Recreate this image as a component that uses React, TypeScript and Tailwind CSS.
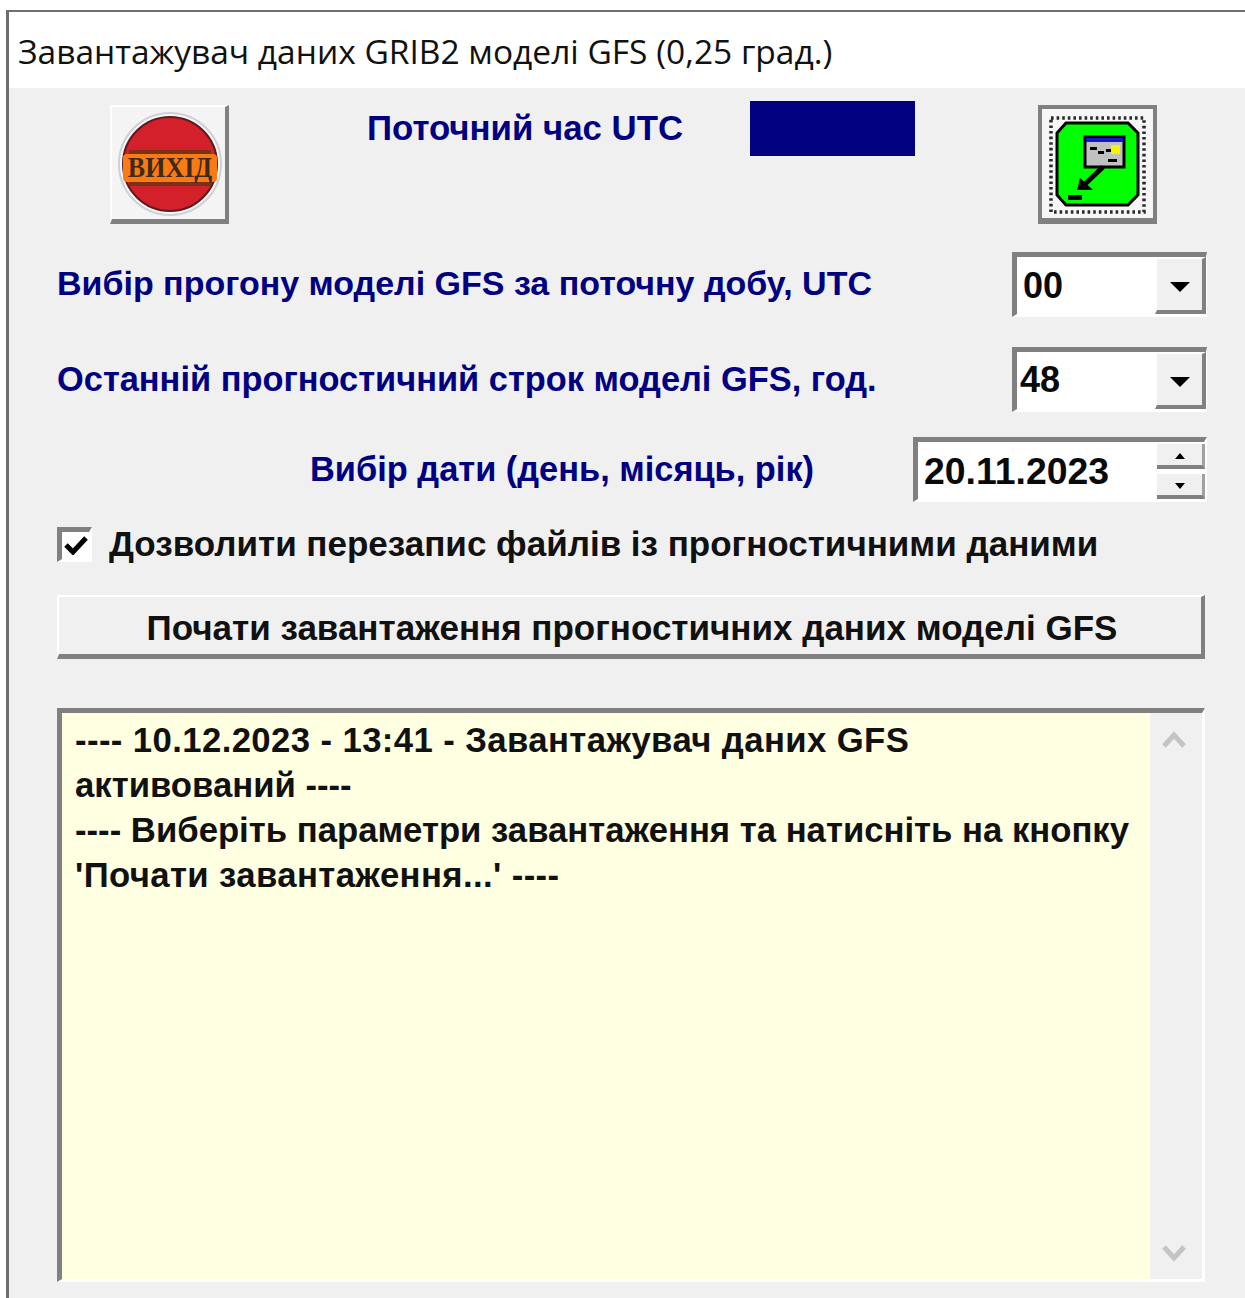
import { ReactNode } from "react"

const raised = "border-t-2 border-l-2 border-t-white border-l-white border-r-[4px] border-b-[5px] border-r-[#808080] border-b-[#808080]"
const sunken = "border-t-[5px] border-l-[5px] border-t-[#808080] border-l-[#808080] border-r-[3px] border-b-[3px] border-r-white border-b-white"
const comboFrame = "border-t-[5px] border-l-[5px] border-t-[#808080] border-l-[#808080] border-r border-b-[3px] border-r-white border-b-white"

function ExitIcon() {
  return (
    <svg viewBox="0 0 113 112" className="h-full w-full">
      <circle cx="58" cy="57" r="51" fill="#f8f8f8" stroke="#cfcfd6" strokeWidth="2" />
      <circle cx="58" cy="57" r="47" fill="#d3202a" stroke="#5c1a1f" strokeWidth="2" />
      <rect x="17" y="43" width="82" height="4" fill="#7a3216" />
      <rect x="17" y="75" width="82" height="4" fill="#7a3216" />
      <rect x="11" y="47" width="94" height="28" rx="4" fill="#fb7a12" />
      <text transform="translate(58 70) scale(1 1.15)" textAnchor="middle" fontFamily="'Liberation Serif', serif" fontWeight="700" fontSize="26" fill="#3d2a1c">
        ВИХІД
      </text>
    </svg>
  )
}

function DownloadIcon() {
  return (
    <svg viewBox="0 0 111 109" className="h-full w-full">
      <rect x="9" y="9" width="93" height="94" fill="none" stroke="#2b2b2b" strokeWidth="3.5" strokeDasharray="2.6 3" />
      <path d="M24 14H86L96 24V86L86 96H24L15 86V24Z" fill="#00ff00" stroke="#000" strokeWidth="3" />
      <rect x="43" y="28" width="39" height="30" fill="#c0c0c0" stroke="#000" strokeWidth="3" />
      <rect x="44" y="29" width="37" height="4" fill="#1515c8" />
      <rect x="48" y="38" width="7" height="3" fill="#000" />
      <rect x="56" y="42" width="6" height="3" fill="#000" />
      <rect x="64" y="40" width="6" height="3" fill="#000" />
      <rect x="66" y="50" width="9" height="3" fill="#000" />
      <rect x="69" y="36" width="9" height="9" fill="#f4f400" />
      <path d="M61 58L41 77" stroke="#000" strokeWidth="5" />
      <path d="M35 81L38 69L51 81Z" fill="#000" />
      <rect x="26" y="86" width="14" height="5" fill="#000" />
    </svg>
  )
}

function Arrow({ size = "lg" }: { size?: "lg" | "sm" }) {
  return size === "lg" ? (
    <svg viewBox="0 0 20 10" className="h-[10px] w-[20px]">
      <path d="M0 0H20L10 10Z" fill="#000" />
    </svg>
  ) : (
    <svg viewBox="0 0 10 6" className="h-[6px] w-[10px]">
      <path d="M0 0H10L5 6Z" fill="#000" />
    </svg>
  )
}

function Combo({ value, pad }: { value: string; pad: string }) {
  return (
    <div className={`flex h-[65px] w-[195px] shrink-0 bg-white ${comboFrame}`}>
      <span className={`flex-1 text-[36px] font-bold leading-[50px] text-[#0a0a0a] ${pad}`}>{value}</span>
      <div className="flex h-[57px] w-[51px] items-center justify-center border-t-2 border-l-2 border-r-[4px] border-b-[4px] border-t-white border-l-white border-r-[#808080] border-b-[#808080] bg-[#f0f0f0] pt-[5px]">
        <Arrow />
      </div>
    </div>
  )
}

function Label({ children, className = "" }: { children: ReactNode; className?: string }) {
  return <span className={`font-bold leading-[40px] text-[#000080] ${className}`}>{children}</span>
}

function SpinButton({ up }: { up?: boolean }) {
  return (
    <div className="flex h-[25px] w-[48px] items-center justify-center border-r-[3px] border-b-[4px] border-r-[#a0a0a0] border-b-[#808080] bg-[#f0f0f0] pt-[3px]">
      <div className={up ? "rotate-180" : ""}>
        <Arrow size="sm" />
      </div>
    </div>
  )
}

export default function App() {
  return (
    <div className="h-[1298px] w-[1245px] overflow-hidden bg-white pt-[10px] pl-[6px] font-['Liberation_Sans',Arial,sans-serif]">
      <div className="h-[1288px] border-t-2 border-l-[3px] border-[#6e6e6e] bg-[#f0f0f0]">
        <div className="flex h-[76px] items-center bg-white pl-[9px] pt-[2px] font-['Open_Sans',sans-serif] text-[33.5px] text-[#111]">
          Завантажувач даних GRIB2 моделі GFS (0,25 град.)
        </div>

        <div className="pl-[48px] pr-[38px]">
          <div className="flex h-[136px] items-start">
            <button className={`ml-[53px] mt-[17px] h-[119px] w-[119px] shrink-0 bg-[#f4f4f4] ${raised}`}>
              <ExitIcon />
            </button>
            <span className="ml-[138px] mt-[20px] w-[315px] shrink-0 whitespace-nowrap text-[34.8px] font-bold leading-[40px] text-[#000080]">Поточний час UTC</span>
            <div className="ml-[68px] mt-[13px] h-[55px] w-[165px] shrink-0 bg-[#000080]" />
            <button className="ml-[123px] mt-[17px] h-[119px] w-[119px] shrink-0 border-[4px] border-b-[6px] border-[#808080] bg-[#f6f6f6]">
              <DownloadIcon />
            </button>
          </div>

          <div className="mt-[28px] flex items-start justify-between">
            <Label className="mt-[11px] text-[34px]">Вибір прогону моделі GFS за поточну добу, UTC</Label>
            <Combo value="00" pad="pl-[6px] pt-[4px]" />
          </div>

          <div className="mt-[30px] flex items-start justify-between">
            <Label className="mt-[12px] text-[34.4px]">Останній прогностичний строк моделі GFS, год.</Label>
            <Combo value="48" pad="pl-[3px] pt-[3px]" />
          </div>

          <div className="mt-[25px] flex items-start justify-between pl-[253px]">
            <Label className="mt-[12px] text-[34.4px]">Вибір дати (день, місяць, рік)</Label>
            <div className={`flex h-[65px] w-[294px] bg-white ${sunken}`}>
              <span className="flex-1 pl-[6px] pt-[1px] text-[37.4px] font-bold leading-[56px] text-[#0a0a0a]">20.11.2023</span>
              <div className="mr-[-1px] flex flex-col gap-[5px] pt-[2px]">
                <SpinButton up />
                <SpinButton />
              </div>
            </div>
          </div>

          <div className="mt-[22px] flex items-center">
            <div className={`flex h-[35px] w-[35px] items-center justify-center bg-white ${sunken}`}>
              <svg viewBox="0 0 24 20" className="h-[20px] w-[24px]">
                <path d="M2 10L9 17L22 3" fill="none" stroke="#000" strokeWidth="5" />
              </svg>
            </div>
            <span className="ml-[17px] text-[35px] font-bold leading-[40px] text-[#111]">Дозволити перезапис файлів із прогностичними даними</span>
          </div>

          <button className={`mt-[31px] flex h-[64px] w-[1148px] items-center justify-center bg-[#f0f0f0] pl-[4px] pt-[6px] text-[35px] font-bold text-[#111] ${raised}`}>
            Почати завантаження прогностичних даних моделі GFS
          </button>

          <div className={`mt-[49px] flex h-[574px] w-[1148px] ${sunken}`}>
            <div className="w-[1088px] whitespace-nowrap bg-[#ffffe1] pl-[13px] pt-[5px] text-[34.7px] font-bold leading-[45px] text-[#111]">
              <span className="tracking-[0.4px]">---- 10.12.2023 - 13:41 - Завантажувач даних GFS</span>
              <br />
              активований ----
              <br />
              ---- Виберіть параметри завантаження та натисніть на кнопку
              <br />
              <span className="tracking-[0.4px]">'Почати завантаження...' ----</span>
            </div>
            <div className="flex flex-1 flex-col items-center justify-between bg-[#f0f0f0] pb-[15px] pr-[4px] pt-[16px]">
              <svg viewBox="0 0 24 20" className="h-[20px] w-[24px]">
                <path d="M2 17L12 6L22 17" fill="none" stroke="#c4c4c4" strokeWidth="5" />
              </svg>
              <svg viewBox="0 0 24 20" className="h-[20px] w-[24px]">
                <path d="M2 3L12 14L22 3" fill="none" stroke="#c4c4c4" strokeWidth="5" />
              </svg>
            </div>
          </div>
        </div>
      </div>
    </div>
  )
}
